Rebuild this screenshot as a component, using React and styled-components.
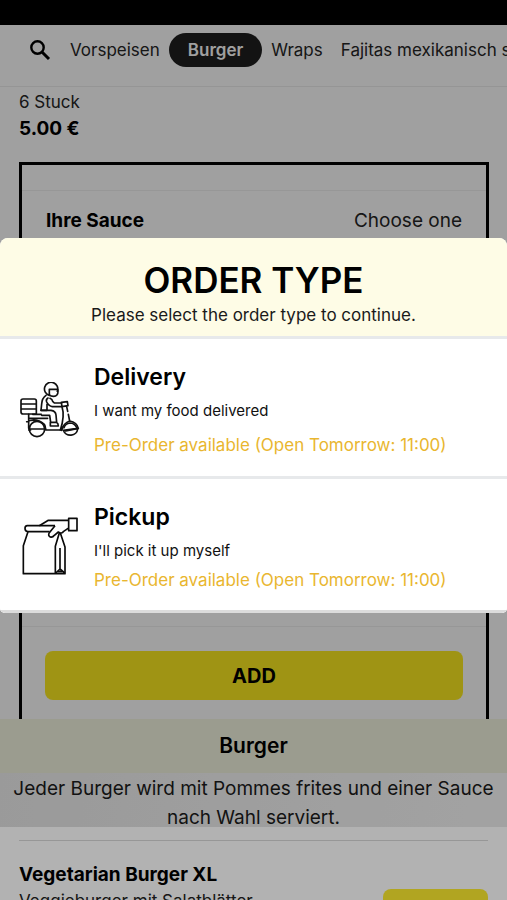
import styled, { createGlobalStyle, css } from "styled-components";

const GlobalStyle = createGlobalStyle`
  * {
    box-sizing: border-box;
  }

  body {
    margin: 0;
    overflow: hidden;
    background: #fff;
    color: #000;
    font-family: Inter, "Liberation Sans", sans-serif;
  }

  h1, h2, h3, p {
    margin: 0;
  }

  button {
    font-family: inherit;
    color: inherit;
    border: 0;
    cursor: pointer;
  }
`;

const StatusBar = styled.div`
  position: relative;
  z-index: 20;
  height: 25px;
  background: #000;
`;

const Muted = styled.div`
  background: #e5e5e5;
`;

const CategoryBar = styled.nav`
  display: flex;
  align-items: flex-start;
  height: 62px;
  padding: 8px 0 0 28px;
  border-bottom: 1px solid #d6d6d6;
  overflow: hidden;
`;

const SearchButton = styled.button`
  display: flex;
  align-items: center;
  height: 34px;
  margin-right: 9px;
  padding: 0;
  background: transparent;
`;

const Category = styled.a`
  flex: none;
  padding: 0 9px;
  font-size: 17px;
  line-height: 34px;
  color: #222;
  text-decoration: none;
  white-space: nowrap;

  ${({ $active }) =>
    $active &&
    css`
      padding: 0 19px;
      border-radius: 17px;
      background: #1c1c1c;
      color: #e5e5e5;
      font-weight: 600;
    `}
`;

const Product = styled.section`
  padding: 2px 18px 0 19px;
`;

const Detail = styled.p`
  font-size: 17px;
  line-height: 26px;
  color: #222;
`;

const Price = styled.p`
  font-size: 19px;
  line-height: 28px;
  font-weight: 700;
`;

const Options = styled.div`
  margin-top: 19px;
  border: 3px solid #000;
  border-bottom: 0;
`;

const OptionGroup = styled.div`
  min-height: 437px;
  margin-top: 25px;
  border: 1px solid #d8d8d8;
  border-width: 1px 0;
`;

const OptionHead = styled.div`
  display: flex;
  justify-content: space-between;
  padding: 16px 24px;
  font-size: 19px;
  line-height: 28px;
`;

const OptionTitle = styled.h3`
  font-size: inherit;
  font-weight: 700;
`;

const OptionHint = styled.span`
  color: #222;
`;

const AddArea = styled.div`
  padding: 24px 23px 19px;
`;

const AddButton = styled.button`
  display: block;
  width: 100%;
  height: 49px;
  border-radius: 8px;
  background: #e4d51e;
  font-size: 20px;
  font-weight: 700;
`;

const GroupTitle = styled.h2`
  background: #dfe0cd;
  font-size: 21px;
  line-height: 54px;
  font-weight: 600;
  text-align: center;
`;

const GroupText = styled.p`
  padding: 1px 12px 0;
  background: linear-gradient(100deg, #dddddd, #e9e9e9);
  font-size: 19px;
  line-height: 29px;
  height: 54px;
  color: #1a1a1a;
  text-align: center;
`;

const MenuItem = styled.article`
  display: flex;
  justify-content: space-between;
  margin: 13px 19px 0;
  padding-top: 20px;
  border-top: 1px solid #d8d8d8;
`;

const ItemName = styled.h3`
  font-size: 19px;
  line-height: 28px;
  font-weight: 700;
`;

const ItemText = styled.p`
  font-size: 17px;
  line-height: 24px;
  color: #222;
`;

const ItemButton = styled.button`
  width: 105px;
  height: 44px;
  margin-top: 28px;
  border-radius: 8px;
  background: #feed30;
`;

const Backdrop = styled.div`
  position: fixed;
  inset: 0;
  z-index: 10;
  display: flex;
  align-items: center;
  padding-bottom: 49px;
  background: rgba(0, 0, 0, 0.3);
`;

const Dialog = styled.div`
  width: 100%;
  border-radius: 8px 8px 5px 5px;
  background: #fff;
  overflow: hidden;
`;

const DialogHead = styled.header`
  padding: 20px 16px 7px;
  background: #fefce6;
  text-align: center;
`;

const DialogTitle = styled.h1`
  font-size: 35px;
  line-height: 44px;
  font-weight: 600;
`;

const DialogText = styled.p`
  font-size: 17px;
  line-height: 27px;
  color: #1a1a1a;
`;

const Choice = styled.button`
  display: flex;
  align-items: center;
  gap: 14px;
  width: 100%;
  padding: ${({ $compact }) => ($compact ? "21px 20px 17px" : "21px 20px 13px")};
  border-top: 3px solid #e7e9eb;
  background: #fff;
  text-align: left;

  &:last-child {
    border-bottom: 3px solid #dcdcdc;
  }

  svg {
    flex: none;
    width: 60px;
    height: 60px;
  }
`;

const ChoiceBody = styled.span`
  display: flex;
  flex-direction: column;
`;

const ChoiceName = styled.span`
  font-size: 23px;
  line-height: 34px;
  font-weight: 600;
`;

const ChoiceText = styled.span`
  font-size: 15px;
  line-height: 34px;
  color: #111;
`;

const ChoiceNote = styled.span`
  font-size: 17px;
  line-height: ${({ $compact }) => ($compact ? "25px" : "35px")};
  color: #e9b62f;
`;

function SearchIcon() {
  return (
    <svg width="24" height="24" viewBox="0 0 24 24" fill="none" stroke="#000">
      <circle cx="9.5" cy="9.5" r="6.2" strokeWidth="2.4" />
      <path d="M14 14l7 7" strokeWidth="3" />
    </svg>
  );
}

function ScooterIcon() {
  return (
    <svg
      viewBox="60 61 180 180"
      fill="none"
      stroke="#111"
      strokeWidth="5"
      strokeLinecap="round"
      strokeLinejoin="round"
      aria-hidden="true"
    >
      {/* box */}
      <path d="M69 112h34q6 0 6 6v39H69q-6 0-6-6v-33q0-6 6-6zM63 127h46M63 142h46" />
      {/* rider */}
      <path d="M148 101a20 20 0 1 1 24-12M148 101V83h26v6q0 15-13 15-9 0-13-5" />
      <path d="M138 101q-12 8-13 26l-2 19h18v-18M144 109q-7 4-4 12 6 12 17 14h27M150 110q7 3 8 9l5 5h22" />
      <path d="M123 146h30q14 2 15 14l2 22h-18l-3-21h-24M151 182v11h24q0-8-6-11" />
      {/* handlebar and front */}
      <path d="M184 122l18-2 2 12-18 3zM186 135q9 28-5 70M200 135l3 14M205 158l4 20M209 178q22 4 26 22l-38 8M209 178q-18 6-24 28" />
      {/* body and wheels */}
      <path d="M86 158v42M88 170h55M98 158h26M80 180q30-12 53 8 4 6 4 17h48M86 205h6" />
      <circle cx="111" cy="202" r="23" />
      <path d="M88 202h49" />
      <path d="M190 206a22 20 0 0 0 43-4M192 198q4-12 18-14 15 1 20 14M190 206l43-6" />
    </svg>
  );
}

function BagIcon() {
  return (
    <svg
      viewBox="60 77 180 180"
      fill="none"
      stroke="#0a0a0a"
      strokeWidth="5"
      strokeLinejoin="round"
      aria-hidden="true"
    >
      <path d="M165 103H82q-7 0-7 8 0 9 8 10h66M84 121l-14 42v84h125v-80l-14-42M178 125l-12 40v82" />
      <path d="M180 170v64M167 245l13-12 14 12M172 241h15" />
      {/* hand */}
      <path d="M118 103l27-16h60M165 103l-17 21q-5 9 3 13 7 2 12-5l12-10q10 7 16-2l12-8h4" />
      <path d="M206 81h25v37h-25z" />
    </svg>
  );
}

const categories = ["Vorspeisen", "Burger", "Wraps", "Fajitas mexikanisch style"];

export default function App() {
  return (
    <>
      <GlobalStyle />
      <StatusBar />

      <main>
        <Muted>
          <CategoryBar>
            <SearchButton aria-label="Search">
              <SearchIcon />
            </SearchButton>
            {categories.map((name) => (
              <Category key={name} href="#" $active={name === "Burger"}>
                {name}
              </Category>
            ))}
          </CategoryBar>

          <Product>
            <Detail>6 Stuck</Detail>
            <Price>5.00 €</Price>
            <Options>
              <OptionGroup>
                <OptionHead>
                  <OptionTitle>Ihre Sauce</OptionTitle>
                  <OptionHint>Choose one</OptionHint>
                </OptionHead>
              </OptionGroup>
              <AddArea>
                <AddButton>ADD</AddButton>
              </AddArea>
            </Options>
          </Product>

          <GroupTitle>Burger</GroupTitle>
          <GroupText>
            Jeder Burger wird mit Pommes frites und einer Sauce nach Wahl
            serviert.
          </GroupText>
        </Muted>

        <MenuItem>
          <div>
            <ItemName>Vegetarian Burger XL</ItemName>
            <ItemText>Veggieburger mit Salatblätter</ItemText>
          </div>
          <ItemButton aria-label="Add Vegetarian Burger XL" />
        </MenuItem>
      </main>

      <Backdrop>
        <Dialog role="dialog" aria-modal="true" aria-labelledby="order-type">
          <DialogHead>
            <DialogTitle id="order-type">ORDER TYPE</DialogTitle>
            <DialogText>Please select the order type to continue.</DialogText>
          </DialogHead>
          <Choice>
            <ScooterIcon />
            <ChoiceBody>
              <ChoiceName>Delivery</ChoiceName>
              <ChoiceText>I want my food delivered</ChoiceText>
              <ChoiceNote>Pre-Order available (Open Tomorrow: 11:00)</ChoiceNote>
            </ChoiceBody>
          </Choice>
          <Choice $compact>
            <BagIcon />
            <ChoiceBody>
              <ChoiceName>Pickup</ChoiceName>
              <ChoiceText>I'll pick it up myself</ChoiceText>
              <ChoiceNote $compact>
                Pre-Order available (Open Tomorrow: 11:00)
              </ChoiceNote>
            </ChoiceBody>
          </Choice>
        </Dialog>
      </Backdrop>
    </>
  );
}
